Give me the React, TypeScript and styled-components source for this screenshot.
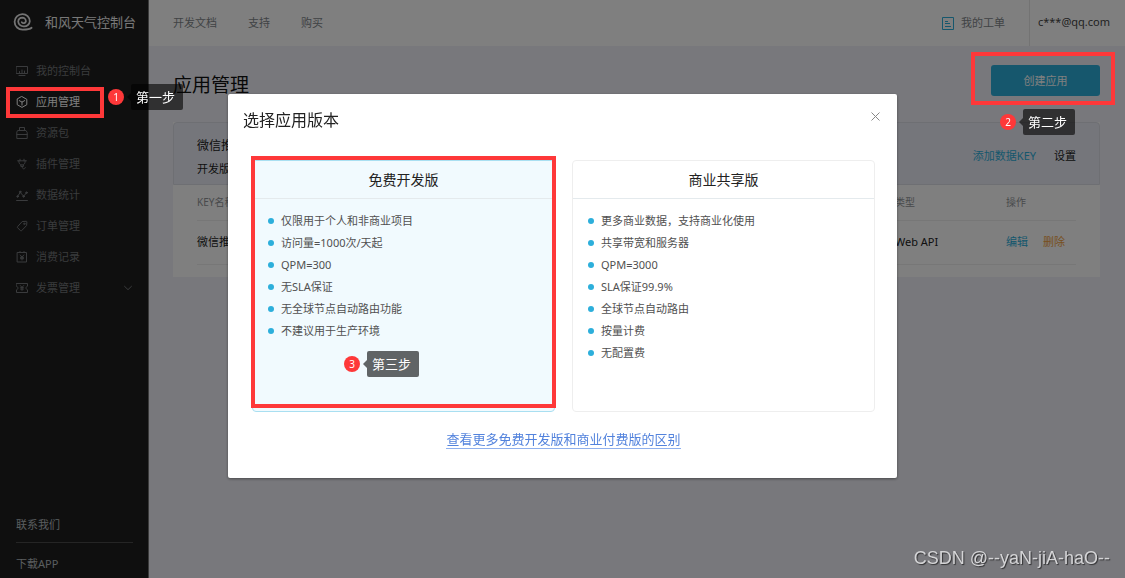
import React from "react";
import styled, { createGlobalStyle, css } from "styled-components";

const red = "#fe3839";
const accent = "#2dafdb";

const GlobalStyle = createGlobalStyle`
  * { box-sizing: border-box; }
  body {
    margin: 0;
    background: #f0f1f8;
    color: #222;
    font-family: "Noto Sans", "Noto Sans CJK SC", sans-serif;
    font-size: 11px;
    line-height: 16px;
  }
  h1, h2, h3, p, ul { margin: 0; padding: 0; font-weight: 400; }
  ul { list-style: none; }
  a { color: inherit; text-decoration: none; }
  button { font: inherit; border: 0; padding: 0; cursor: pointer; }
`;

const Page = styled.div`
  display: flex;
  min-height: 100vh;
`;

/* Sidebar */

const Sidebar = styled.aside`
  display: flex;
  flex-direction: column;
  flex: 0 0 149px;
  background: #1e1e1e;
  border-right: 1px solid #777;
`;

const Brand = styled.div`
  display: flex;
  align-items: center;
  gap: 12px;
  height: 43px;
  padding-left: 13px;
  margin-bottom: 12px;
  color: #f0f0f0;
  font-size: 13px;
`;

const MenuItem = styled.li<{ $active?: boolean }>`
  position: relative;
  color: ${(p) => (p.$active ? "#fff" : "#74777a")};
`;

const MenuLink = styled.a`
  display: flex;
  align-items: center;
  gap: 8px;
  height: 31px;
  padding: 0 16px;

  svg:last-child:not(:first-child) { margin-left: auto; }
`;

const SideFooter = styled.div`
  display: flex;
  flex-direction: column;
  margin: auto 15px 0 16px;
  color: #b4bbbf;
`;

const FooterLink = styled.a<{ $divided?: boolean }>`
  padding: 8px 0 6px;
  ${(p) => p.$divided && css`
    padding-bottom: 9px;
    margin-bottom: 5px;
    border-bottom: 1px solid #4a4a4a;
  `}
`;

/* Main column */

const Main = styled.div`
  flex: 1;
  min-width: 0;
`;

const TopBar = styled.header`
  display: flex;
  align-items: center;
  height: 46px;
  padding-left: 24px;
  background: #fff;
  color: #82868a;
`;

const TopNav = styled.nav`
  display: flex;
  gap: 31px;
  flex: 1;
`;

const TicketLink = styled.a`
  display: flex;
  align-items: center;
  gap: 7px;
  padding-right: 24px;
`;

const Account = styled.a`
  display: flex;
  align-items: center;
  align-self: stretch;
  padding: 0 15px 2px 8px;
  border-left: 1px solid #e6e6e6;
  color: #444;
`;

const Content = styled.main`
  padding: 19px 25px 24px 24px;
`;

const PageHead = styled.div`
  display: flex;
  justify-content: space-between;
  align-items: flex-start;
  height: 57px;
`;

const PageTitle = styled.h1`
  font-size: 19px;
  line-height: 40px;
  color: #111;
`;

const Anchor = styled.div`
  position: relative;
`;

const CreateButton = styled.button`
  width: 109px;
  height: 31px;
  border-radius: 3px;
  background: #2dafdb;
  color: #fff;
`;

const Card = styled.section`
  background: #fff;
`;

const CardHead = styled.div`
  display: flex;
  justify-content: space-between;
  align-items: center;
  height: 63px;
  padding: 7px 23px 0;
  background: #ebedf7;
  border: 1px solid #dcdee7;
  border-radius: 4px 4px 0 0;
`;

const CardName = styled.h2`
  font-size: 12px;
  line-height: 16px;
  margin-bottom: 7px;
`;

const CardActions = styled.div`
  display: flex;
  gap: 18px;
  margin-bottom: 3px;
`;

const TextLink = styled.a<{ $color: string }>`
  color: ${(p) => p.$color};
`;

const TableWrap = styled.div`
  padding: 0 24px 12px;
`;

const Table = styled.table`
  width: 100%;
  border-collapse: collapse;
  table-layout: fixed;

  th, td {
    padding: 0;
    text-align: left;
    font-weight: 400;
    border-bottom: 1px solid #eee;
  }
  th { height: 35px; font-size: 10px; color: #929598; }
  td { height: 44px; }
  th:nth-child(2) { width: 111px; }
  th:nth-child(3) { width: 70px; }
`;

const RowActions = styled.div`
  display: flex;
  gap: 15px;
`;

/* Dialog */

const Overlay = styled.div`
  position: fixed;
  inset: 0;
  z-index: 10;
  display: flex;
  justify-content: center;
  align-items: flex-start;
  padding: 94px 24px 0;
  background: rgba(0, 0, 0, 0.5);
`;

const Dialog = styled.div`
  width: 100%;
  max-width: 669px;
  padding: 14px 22px 29px 24px;
  border-radius: 2px;
  background: #fff;
  box-shadow: 0 1px 3px rgba(0, 0, 0, 0.4);
`;

const DialogHead = styled.div`
  display: flex;
  justify-content: space-between;
  align-items: flex-start;
  margin: 0 -8px 28px -9px;
`;

const DialogTitle = styled.h2`
  font-size: 16px;
  line-height: 24px;
  color: #222;
`;

const CloseButton = styled.button`
  display: grid;
  place-items: center;
  width: 16px;
  height: 16px;
  background: none;
  color: #888;
`;

const Plans = styled.div`
  display: grid;
  grid-template-columns: 1fr 1fr;
  gap: 17px;
`;

const Plan = styled.section<{ $selected?: boolean }>`
  position: relative;
  min-height: 252px;
  border: 1px solid ${(p) => (p.$selected ? "#a9dff1" : "#eee")};
  border-radius: 4px;
  background: ${(p) => (p.$selected ? "#f1fafe" : "#fff")};
`;

const PlanName = styled.h3`
  font-size: 14px;
  line-height: 37px;
  text-align: center;
  border-bottom: 1px solid #e4eaed;
`;

const Features = styled.ul`
  padding: 11px 15px;
  color: #505050;
`;

const Feature = styled.li`
  display: flex;
  align-items: center;
  gap: 7px;
  line-height: 22px;

  &::before {
    content: "";
    width: 6px;
    height: 6px;
    border-radius: 50%;
    background: ${accent};
  }
`;

const MoreLine = styled.p`
  display: flex;
  justify-content: center;
  margin-top: 19px;
`;

const MoreLink = styled.a`
  font-size: 13px;
  line-height: 17px;
  color: #5383dd;
  border-bottom: 1px solid #8fb0ee;
`;

/* Tutorial annotations laid over the page */

const Highlight = styled.div<{ $inset: string }>`
  position: absolute;
  inset: ${(p) => p.$inset};
  z-index: 20;
  border: 4px solid ${red};
  pointer-events: none;
`;

const StepMark = styled.div<{ $left: number; $top: number }>`
  position: absolute;
  left: ${(p) => p.$left}px;
  top: ${(p) => p.$top}px;
  z-index: 20;
  display: flex;
  align-items: center;
  gap: 7px;
  color: #fff;
  white-space: nowrap;
`;

const StepNumber = styled.span`
  width: 16px;
  height: 16px;
  border-radius: 50%;
  background: ${red};
  font-size: 10px;
  line-height: 16px;
  text-align: center;
`;

const StepTip = styled.span`
  position: relative;
  width: 52px;
  border-radius: 2px;
  background: rgba(0, 0, 0, 0.6);
  font-size: 13px;
  line-height: 26px;
  padding-left: 5px;

  &::before {
    content: "";
    position: absolute;
    left: -4px;
    top: 9px;
    border: solid transparent;
    border-width: 4px 4px 4px 0;
    border-right-color: rgba(0, 0, 0, 0.6);
  }
`;

const Watermark = styled.div`
  position: fixed;
  right: 15px;
  bottom: 8px;
  z-index: 30;
  font-family: "Liberation Sans", sans-serif;
  font-size: 18px;
  line-height: 24px;
  color: #d4d4d6;
  text-shadow: 1px 1px 1px rgba(0, 0, 0, 0.6);
`;

function Step({ n, label, left, top }: { n: number; label: string; left: number; top: number }) {
  return (
    <StepMark $left={left} $top={top}>
      <StepNumber>{n}</StepNumber>
      <StepTip>{label}</StepTip>
    </StepMark>
  );
}

function Icon({ children, size = 12 }: { children: React.ReactNode; size?: number }) {
  return (
    <svg width={size} height={size} viewBox="0 0 12 12" fill="none" stroke="currentColor"
      strokeLinecap="round" strokeLinejoin="round" aria-hidden="true">
      {children}
    </svg>
  );
}

const icons = {
  console: <path d="M.5 1.500h11v7H.500zM3.500 6.500v2M6 5v3.500M8.500 6v2.500M3 10.500h6" />,
  app: <path d="M6 .6l4.800 2.700v5.400L6 11.400 1.200 8.700V3.300zM3.300 4.600L6 6.100l2.700-1.500M6 6.100v3" />,
  pack: <path d="M3.500 3.500v-3h5v3M2 3.500h8l1.200 2v6H.8v-6zM.8 7.500h10.400" />,
  plugin: <path d="M1.600 2.800h8.800M4 1.200v1.600M8 1.200v1.600M2.800 2.800c0 2.400.8 4.200 3.200 4.200s3.200-1.800 3.200-4.200M4.800 7v1.400h2.600V7M6.100 8.400c0 3 2.600 3.400 3.200 1.200" />,
  stats: (
    <>
      <path d="M.6 11.500h10.800M1.600 7.400l2.600-4 3.400 3.800 2.900-3.400" />
      <g fill="currentColor">
        <circle cx="1.600" cy="7.500" r=".8" /><circle cx="4.200" cy="2.900" r=".8" />
        <circle cx="7.600" cy="7.400" r=".8" /><circle cx="10.500" cy="3.700" r=".8" />
      </g>
    </>
  ),
  order: (
    <>
      <path d="M6.600 1.500l3.700-.2c.4 0 .6.300.6.700l-.3 3.500-5 5.200c-.3.300-.7.300-1 0L1.500 7.700c-.3-.3-.3-.7 0-1z" />
      <circle cx="8.300" cy="3.800" r=".7" />
    </>
  ),
  records: <path d="M1.500 1.500h9v9.500h-9zM4 .5v1M8 .5v1M4.200 4L6 6l1.800-2M6 6v3M4.400 6.300h3.200M4.400 7.700h3.200" />,
  invoice: <path d="M.5 1.500h11v2.700c-2 .4-2 3.200 0 3.600v2.700H.5V7.800c2-.4 2-3.200 0-3.600zM4.400 3.600L6 5.400l1.600-1.800M6 5.400v3M4.600 5.700h2.800M4.600 7.100h2.800" />,
};

const menu: { icon: keyof typeof icons; label: string; active?: boolean; expandable?: boolean }[] = [
  { icon: "console", label: "我的控制台" },
  { icon: "app", label: "应用管理", active: true },
  { icon: "pack", label: "资源包" },
  { icon: "plugin", label: "插件管理" },
  { icon: "stats", label: "数据统计" },
  { icon: "order", label: "订单管理" },
  { icon: "records", label: "消费记录" },
  { icon: "invoice", label: "发票管理", expandable: true },
];

const freeFeatures = ["仅限用于个人和非商业项目", "访问量=1000次/天起", "QPM=300", "无SLA保证", "无全球节点自动路由功能", "不建议用于生产环境"];
const sharedFeatures = ["更多商业数据，支持商业化使用", "共享带宽和服务器", "QPM=3000", "SLA保证99.9%", "全球节点自动路由", "按量计费", "无配置费"];

function Logo() {
  return (
    <svg width="20" height="18" viewBox="0 0 20 18" fill="none" stroke="#e8e8e8" strokeWidth="1.8" strokeLinecap="round" aria-hidden="true">
      <path d="M18.600 14.800C17 16.200 14.500 16.700 10 16.700A8 8 0 0 1 1.600 8.700A8 7.700 0 0 1 9.500 1.100A7.300 7.300 0 0 1 16.800 8.200A5.600 5.600 0 0 1 11 13.400A5.300 5.300 0 0 1 5.200 8.500A4.300 4.300 0 0 1 9.400 4.700A3.600 3.600 0 0 1 12.900 8.300A2.300 2.300 0 0 1 8.800 9.200" />
    </svg>
  );
}

export default function App() {
  return (
    <>
      <GlobalStyle />
      <Page>
        <Sidebar>
          <Brand><Logo />和风天气控制台</Brand>
          <ul>
            {menu.map((m) => (
              <MenuItem key={m.label} $active={m.active}>
                <MenuLink href="#">
                  <Icon>{icons[m.icon]}</Icon>
                  {m.label}
                  {m.expandable && <Icon size={8}><path strokeWidth="1.500" d="M.8 3.500L6 8.500l5.200-5" /></Icon>}
                </MenuLink>
                {m.active && (
                  <>
                    <Highlight $inset="1px 44px -1px 6px" />
                    <Step n={1} label="第一步" left={108} top={-2} />
                  </>
                )}
              </MenuItem>
            ))}
          </ul>
          <SideFooter>
            <FooterLink href="#" $divided>联系我们</FooterLink>
            <FooterLink href="#">下载APP</FooterLink>
          </SideFooter>
        </Sidebar>
        <Main>
          <TopBar>
            <TopNav>
              <a href="#">开发文档</a>
              <a href="#">支持</a>
              <a href="#">购买</a>
            </TopNav>
            <TicketLink href="#">
              <svg width="12" height="13" viewBox="0 0 12 13" fill="none" stroke={accent} aria-hidden="true">
                <path d="M.5.5h11v12H.5zM3 4.500h3M3 6.500h5M3 9.500h6" />
              </svg>
              我的工单
            </TicketLink>
            <Account href="#">c***@qq.com</Account>
          </TopBar>
          <Content>
            <PageHead>
              <PageTitle>应用管理</PageTitle>
              <Anchor>
                <CreateButton type="button">创建应用</CreateButton>
                <Highlight $inset="-13px -15px -9px -20px" />
                <Step n={2} label="第二步" left={9} top={44} />
              </Anchor>
            </PageHead>
            <Card>
              <CardHead>
                <div>
                  <CardName>微信推送</CardName>
                  <p>开发版</p>
                </div>
                <CardActions>
                  <TextLink href="#" $color={accent}>添加数据KEY</TextLink>
                  <TextLink href="#" $color="#222">设置</TextLink>
                </CardActions>
              </CardHead>
              <TableWrap>
                <Table>
                  <thead>
                    <tr><th>KEY名称</th><th>类型</th><th>操作</th></tr>
                  </thead>
                  <tbody>
                    <tr>
                      <td>微信推送</td>
                      <td>Web API</td>
                      <td>
                        <RowActions>
                          <TextLink href="#" $color={accent}>编辑</TextLink>
                          <TextLink href="#" $color="#f0a040">删除</TextLink>
                        </RowActions>
                      </td>
                    </tr>
                  </tbody>
                </Table>
              </TableWrap>
            </Card>
          </Content>
        </Main>
      </Page>
      <Overlay>
        <Dialog role="dialog" aria-labelledby="plan-title">
          <DialogHead>
            <DialogTitle id="plan-title">选择应用版本</DialogTitle>
            <CloseButton type="button" aria-label="关闭">
              <svg width="9" height="9" viewBox="0 0 9 9" stroke="currentColor" aria-hidden="true">
                <path d="M.5.5l8 8M8.500.5l-8 8" />
              </svg>
            </CloseButton>
          </DialogHead>
          <Plans>
            <Plan $selected>
              <PlanName>免费开发版</PlanName>
              <Features>{freeFeatures.map((f) => <Feature key={f}>{f}</Feature>)}</Features>
              <Highlight $inset="-5px -2px 3px -2px" />
              <Step n={3} label="第三步" left={91} top={190} />
            </Plan>
            <Plan>
              <PlanName>商业共享版</PlanName>
              <Features>{sharedFeatures.map((f) => <Feature key={f}>{f}</Feature>)}</Features>
            </Plan>
          </Plans>
          <MoreLine>
            <MoreLink href="#">查看更多免费开发版和商业付费版的区别</MoreLink>
          </MoreLine>
        </Dialog>
      </Overlay>
      <Watermark>CSDN @--yaN-jiA-haO--</Watermark>
    </>
  );
}
